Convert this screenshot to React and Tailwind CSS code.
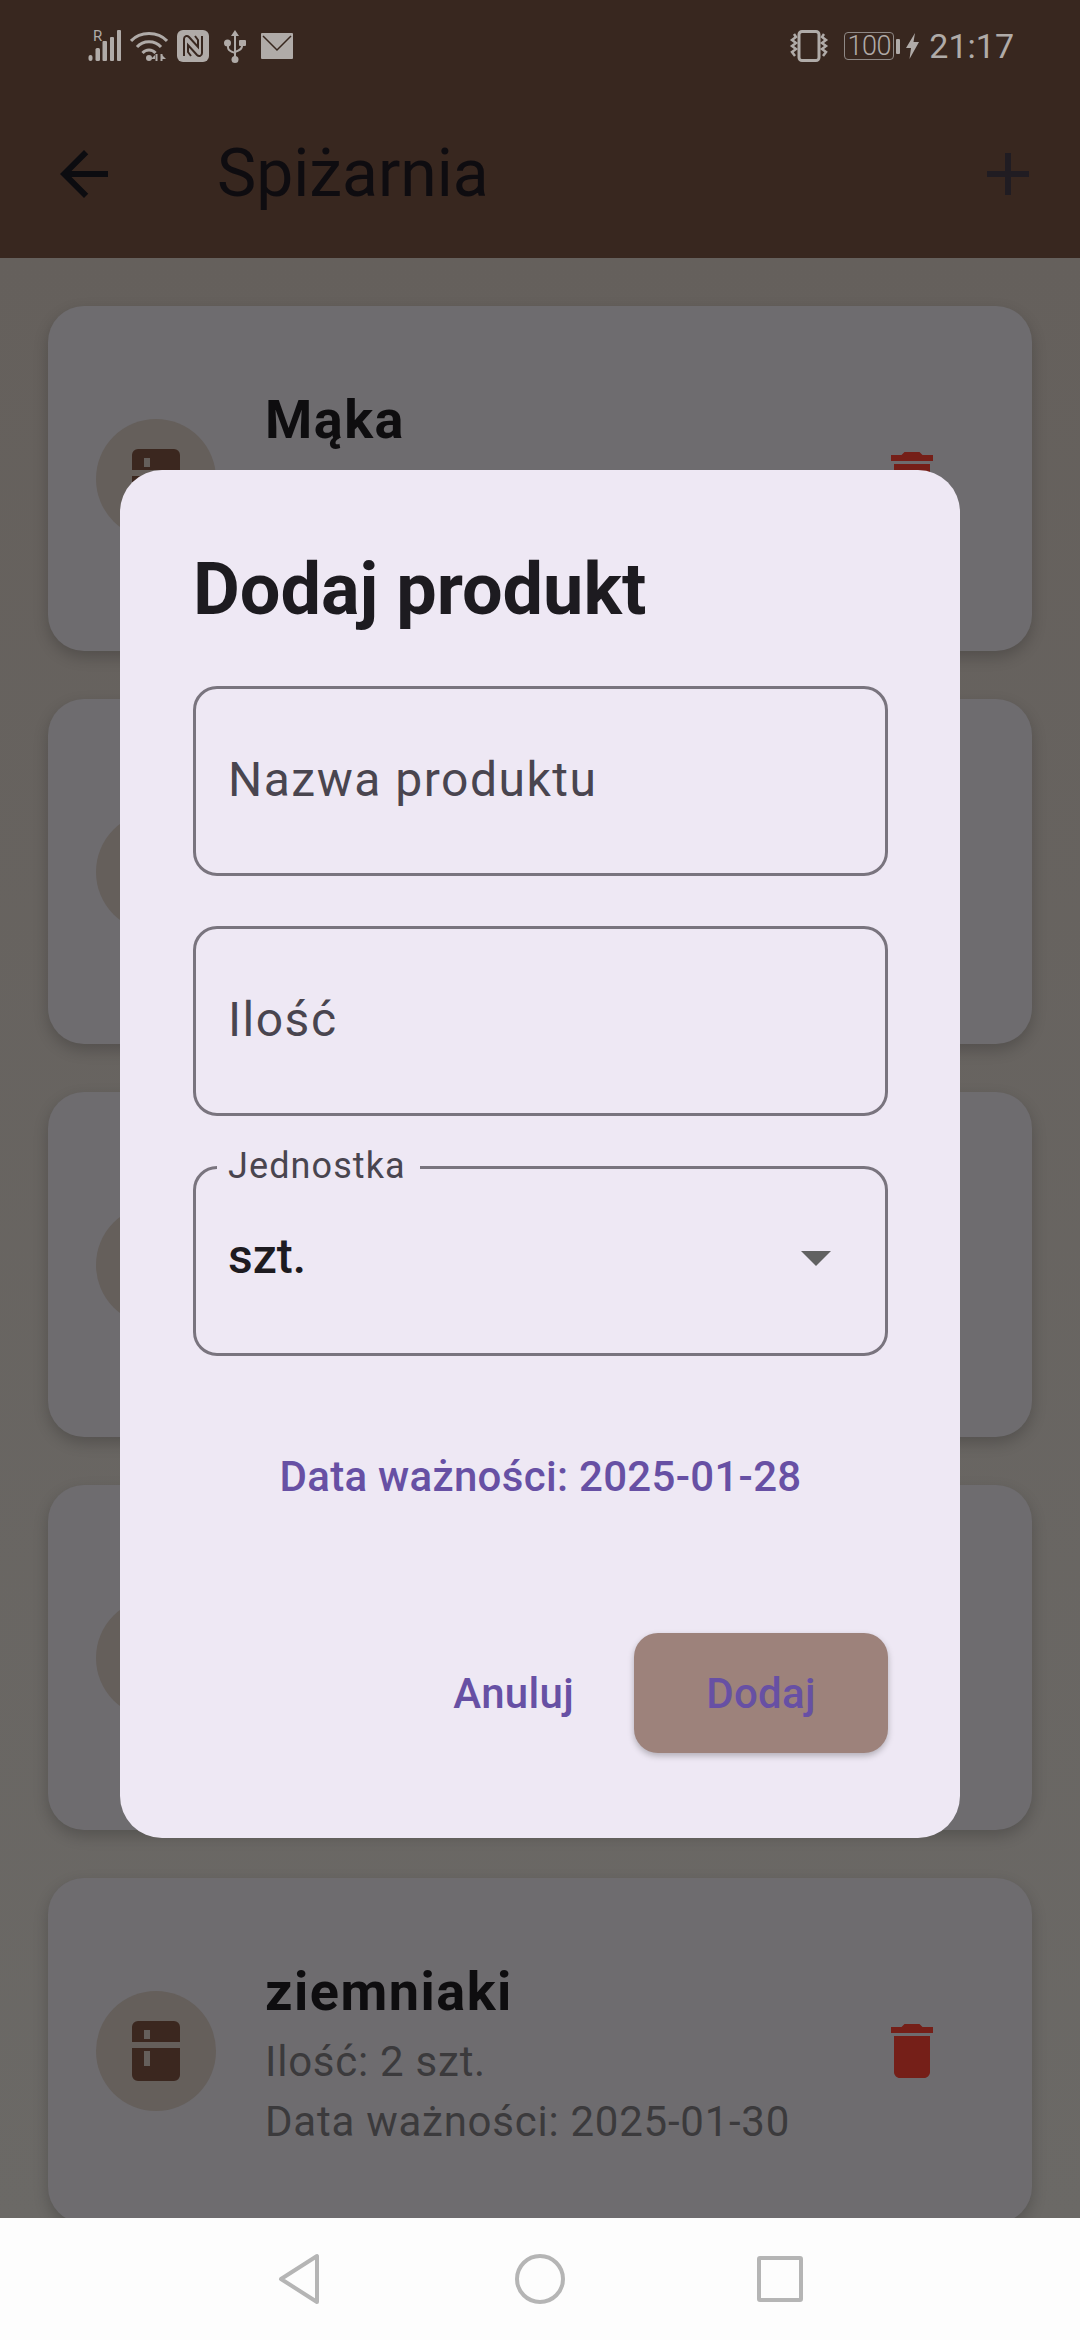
import React from "react";

const products = [
  { name: "Mąka" },
  {},
  {},
  {},
  { name: "ziemniaki", qty: "Ilość: 2 szt.", date: "Data ważności: 2025-01-30" },
];

const StatusLeft = () => (
  <div className="flex items-center text-[#b0aba8]">
    <div className="relative h-[32px] w-[34px]">
      <span className="absolute left-[5px] top-[-1px] text-[15px] leading-[15px]">R</span>
      <svg width="34" height="32" viewBox="0 0 34 32" fill="currentColor">
        <rect x="0.5" y="25" width="4" height="6" rx="2" />
        <rect x="7.5" y="18" width="4.5" height="13" rx="1.5" />
        <rect x="14.5" y="11" width="4.5" height="20" rx="1" />
        <rect x="22" y="7" width="4" height="24" rx="1" />
        <rect x="29" y="0" width="4" height="31" rx="1" />
      </svg>
    </div>
    <svg className="ml-[8px]" width="38" height="32" viewBox="0 0 38 32" fill="none" stroke="currentColor" strokeWidth="3">
      <path d="M1 11 C10 1 28 1 37 11" />
      <path d="M7 17 C13 10 25 10 31 17" />
      <path d="M12.5 23 C16 19 22 19 25.5 23" />
      <circle cx="19" cy="28" r="3" fill="currentColor" stroke="none" />
      <path d="M25 25 l-4 4 h4z M32 25 l4 4 h-4z M28 23 v8" fill="currentColor" stroke="none" />
      <path d="M26.5 24v7M31.5 24v7" strokeWidth="2" />
    </svg>
    <svg className="ml-[9px]" width="32" height="32" viewBox="0 0 32 32">
      <rect x="0" y="0" width="32" height="32" rx="6" fill="currentColor" />
      <path d="M7 26 V9 C7 6 10 5 12 7 L21 17 V10 L18 6 M25 6 V23 C25 26 22 27 20 25 L11 15 V22 L14 26" fill="none" stroke="#38271f" strokeWidth="2" />
    </svg>
    <svg className="ml-[15px]" width="22" height="33" viewBox="0 0 22 33" fill="currentColor">
      <path d="M11 0 L15 6 H12 V27 H10 V6 H7z" />
      <circle cx="11" cy="29.5" r="3.5" />
      <circle cx="3.5" cy="13" r="3.5" />
      <rect x="15" y="10" width="7" height="6" rx="1" />
      <path d="M3 14 h2 v3 c0 2 1 3 6 5 v2 c-5-2-8-3-8-7z" />
      <path d="M19 14 h-2 v2 c0 2-2 3-6 5 v2 c6-2 8-4 8-7z" />
    </svg>
    <svg className="ml-[15px]" width="32" height="26" viewBox="0 0 32 26">
      <rect width="32" height="26" rx="1" fill="currentColor" />
      <path d="M2 3 L16 17 L30 3" fill="none" stroke="#38271f" strokeWidth="1.5" />
    </svg>
  </div>
);

const StatusRight = () => (
  <div className="flex items-center text-[#b0aba8]">
    <svg width="40" height="32" viewBox="0 0 40 32" fill="none" stroke="currentColor">
      <rect x="10" y="1.5" width="20" height="29" rx="3" strokeWidth="3" />
      <path d="M5 4 l2 3 -4 3 4 3 -4 3 4 3 -4 3 3 4" strokeWidth="2.5" />
      <path d="M35 4 l-2 3 4 3 -4 3 4 3 -4 3 4 3 -3 4" strokeWidth="2.5" />
    </svg>
    <div className="ml-[15px] flex h-[28px] w-[50px] items-center justify-center rounded-[4px] border border-[#8f8986] font-light text-[27px] tracking-[-0.5px]">
      100
    </div>
    <div className="ml-[2px] h-[15px] w-[4px] rounded-[1px] bg-[#b0aba8]" />
    <svg className="ml-[6px]" width="13" height="26" viewBox="0 0 13 26" fill="currentColor">
      <path d="M9 0 L0 15 H5 L3.5 26 L13 9 H7.5z" />
    </svg>
    <span className="ml-[10px] text-[34px] leading-none">21:17</span>
  </div>
);

const AppBar = () => (
  <div className="bg-[#38271f]">
    <div className="flex h-[90px] items-center justify-between pl-[88px] pr-[66px] pt-[2px]">
      <StatusLeft />
      <StatusRight />
    </div>
    <div className="flex h-[168px] items-center pl-[48px] pr-[36px]">
      <svg width="72" height="72" viewBox="0 0 24 24" fill="#0c0c10">
        <path d="M20 11H7.83l5.59-5.59L12 4l-8 8 8 8 1.41-1.41L7.83 13H20v-2z" />
      </svg>
      <span className="ml-[97px] text-[66px] leading-none text-[#0e0c10]">Spiżarnia</span>
      <svg className="ml-auto" width="72" height="72" viewBox="0 0 24 24" fill="#201c22">
        <path d="M19 13h-6v6h-2v-6H5v-2h6V5h2v6h6v2z" />
      </svg>
    </div>
  </div>
);

const ProductCard = ({ name, qty, date }) => (
  <div className="flex h-[345px] shrink-0 items-center rounded-[36px] bg-[#6e6c6f] px-[48px] shadow-[0_6px_15px_rgba(0,0,0,0.2)]">
    <div className="flex h-[120px] w-[120px] shrink-0 items-center justify-center rounded-full bg-[#655f5b]">
      <svg width="72" height="72" viewBox="0 0 24 24" fill="#3b271f" fillRule="evenodd">
        <path d="M6 2h12a2 2 0 0 1 2 2v5H4V4a2 2 0 0 1 2-2zM8 5v3h2V5zM4 11h16v9a2 2 0 0 1-2 2H6a2 2 0 0 1-2-2zM8 12v5h2v-5z" />
      </svg>
    </div>
    <div className="ml-[49px] flex h-[202px] flex-1 flex-col">
      <div className="h-[82px] pt-[1px] text-[54px] font-bold leading-[82px] tracking-[1.5px] text-[#0e0d0f]">{name}</div>
      <div className="h-[60px] text-[42px] leading-[60px] tracking-[0.75px] text-[#3b3a3c]">{qty}</div>
      <div className="h-[60px] text-[42px] leading-[60px] tracking-[0.75px] text-[#3b3a3c]">{date}</div>
    </div>
    <svg className="mr-[36px]" width="72" height="72" viewBox="0 0 24 24" fill="#751f18">
      <path d="M6 19c0 1.1.9 2 2 2h8c1.1 0 2-.9 2-2V7H6v12zM19 4h-3.5l-1-1h-5l-1 1H5v2h14V4z" />
    </svg>
  </div>
);

const Field = ({ label }) => (
  <div className="flex h-[190px] items-center rounded-[24px] border-[3px] border-[#79747e] px-[32px] pb-[2px]">
    <span className="text-[48px] tracking-[1.5px] text-[#49454f]">{label}</span>
  </div>
);

const AddDialog = () => (
  <div className="absolute left-[120px] top-[470px] flex h-[1368px] w-[840px] flex-col rounded-[42px] bg-[#eee8f4] pl-[73px] pr-[72px] pt-[72px]">
    <h2 className="text-[72px] font-bold leading-[96px] text-[#1d1b20]">Dodaj produkt</h2>
    <div className="mt-[48px] flex flex-col gap-[50px]">
      <Field label="Nazwa produktu" />
      <Field label="Ilość" />
      <div className="relative flex h-[190px] items-center justify-between rounded-[24px] border-[3px] border-[#79747e] pl-[32px] pr-[33px] pb-[8px]">
        <span className="absolute left-[21px] top-[-24px] bg-[#eee8f4] pl-[11px] pr-[14px] text-[36px] leading-[42px] tracking-[1.1px] text-[#49454f]">
          Jednostka
        </span>
        <span className="text-[48px] font-medium text-[#1d1b20]">szt.</span>
        <svg width="72" height="72" viewBox="0 0 24 24" fill="#616161">
          <path d="M7 10l5 5 5-5z" />
        </svg>
      </div>
    </div>
    <div className="mt-[60px] flex h-[120px] items-center justify-center text-[42px] font-medium tracking-[0.3px] text-[#6750a4]">
      Data ważności: 2025-01-28
    </div>
    <div className="mt-[97px] flex items-center justify-end text-[42px] font-medium tracking-[0.3px] text-[#6750a4]">
      <span className="mr-[60px]">Anuluj</span>
      <span className="flex h-[120px] w-[254px] items-center justify-center rounded-[24px] bg-[#9d827b] shadow-[0_3px_6px_rgba(0,0,0,0.25)]">
        Dodaj
      </span>
    </div>
  </div>
);

const NavBar = () => (
  <div className="relative flex h-[122px] shrink-0 items-center justify-center bg-[#fdfdfd] pl-[1px]">
    <svg width="42" height="52" viewBox="0 0 42 52" fill="none" stroke="#b5b5b5" strokeWidth="4" strokeLinejoin="round">
      <path d="M39 3 V49 L3 26z" />
    </svg>
    <svg className="ml-[195px]" width="50" height="52" viewBox="0 0 50 52" fill="none" stroke="#b5b5b5" strokeWidth="4">
      <circle cx="25" cy="26" r="23" />
    </svg>
    <svg className="ml-[192px]" width="46" height="46" viewBox="0 0 46 46" fill="none" stroke="#b5b5b5" strokeWidth="4">
      <rect x="2" y="2" width="42" height="42" rx="1" />
    </svg>
  </div>
);

const App = () => {
  return (
    <div className="relative flex h-[2340px] w-[1080px] flex-col overflow-hidden bg-[#67635f] font-['Roboto',sans-serif]">
      <AppBar />
      <div className="flex flex-1 flex-col gap-[48px] overflow-hidden bg-gradient-to-b from-[#65605c] to-[#6b6966] px-[48px] pt-[48px]">
        {products.map((product, i) => (
          <ProductCard key={i} {...product} />
        ))}
      </div>
      <NavBar />
      <AddDialog />
    </div>
  );
};

export default App;
